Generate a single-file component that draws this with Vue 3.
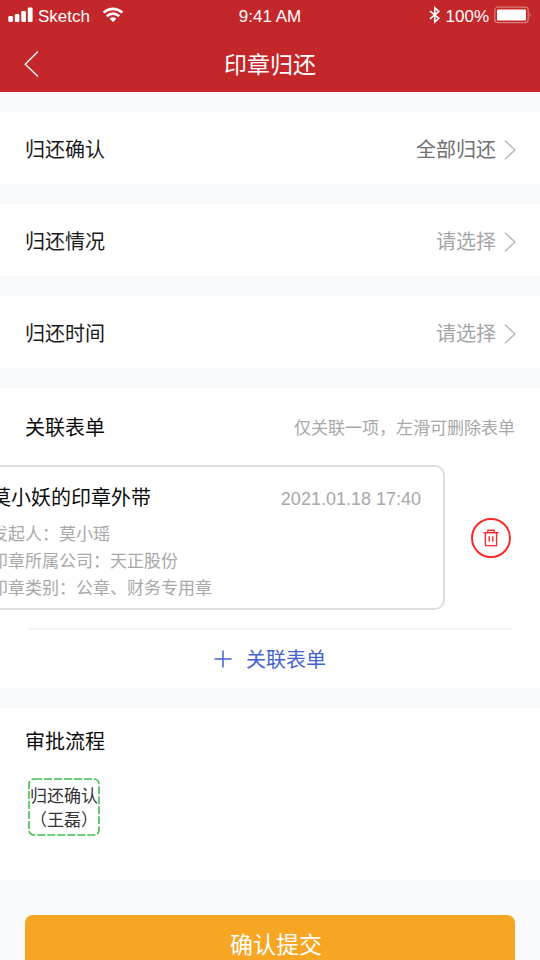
<script setup>
import { ref } from 'vue'

const fields = ref([
  { id: 'confirm', label: '归还确认', value: '全部归还' },
  { id: 'status', label: '归还情况', value: '' },
  { id: 'time', label: '归还时间', value: '' },
])

const form = {
  title: '莫小妖的印章外带',
  time: '2021.01.18 17:40',
  details: [
    { name: '发起人', value: '莫小瑶' },
    { name: '印章所属公司', value: '天正股份' },
    { name: '印章类别', value: '公章、财务专用章' },
  ],
}
</script>

<template>
  <div class="page">
    <header class="top">
      <div class="status">
        <div class="status-side">
          <svg class="signal" width="25" height="16" viewBox="0 0 25 16" fill="#fff" aria-hidden="true">
            <rect x="0.3" y="9" width="4.6" height="6" rx="1.2" />
            <rect x="6.8" y="7" width="4.6" height="8" rx="1.2" />
            <rect x="13.3" y="4" width="4.6" height="11" rx="1.2" />
            <rect x="19.8" y="0.5" width="4.8" height="14.5" rx="1.2" />
          </svg>
          <span>Sketch</span>
          <svg class="wifi" width="22" height="16" viewBox="0 0 22 16" fill="none" stroke="#fff" stroke-width="2.6" aria-hidden="true">
            <path d="M1.6 5.6 Q11 -2 20.4 5.6" />
            <path d="M4.8 9.2 Q11 4 17.2 9.2" />
            <path d="M7.6 11.7 Q11 8.8 14.4 11.7 L11 15z" fill="#fff" stroke="none" />
          </svg>
        </div>
        <span class="clock">9:41 AM</span>
        <div class="status-side end">
          <svg class="bluetooth" width="12" height="18" viewBox="0 0 12 18" fill="none" stroke="#fff" stroke-width="1.6" aria-hidden="true">
            <path d="M1 5 L9.8 12.3 L5.8 16 V1.8 L9.8 5.4 L1 12.8" />
          </svg>
          <span>100%</span>
          <svg class="battery" width="38" height="18" viewBox="0 0 38 18" aria-hidden="true">
            <rect x="0.8" y="1.2" width="33.4" height="15.4" rx="3" fill="none" stroke="#fff" stroke-opacity=".4" stroke-width="1.2" />
            <rect x="3" y="3.4" width="29" height="11" rx="1" fill="#fff" />
            <path d="M35.6 6.5 Q38 9 35.6 11.5z" fill="#fff" fill-opacity=".4" />
          </svg>
        </div>
      </div>
      <nav class="nav">
        <button class="back" type="button" aria-label="返回">
          <svg width="16" height="28" viewBox="0 0 16 28" fill="none" stroke="#fff" stroke-width="1.4" aria-hidden="true">
            <path d="M14 1.6 L1.2 14.2 L14 26.4" />
          </svg>
        </button>
        <h1>印章归还</h1>
      </nav>
    </header>

    <main class="content">
      <button v-for="f in fields" :key="f.id" class="field" type="button">
        <span class="label">{{ f.label }}</span>
        <span class="value" :class="{ filled: f.value }">{{ f.value || '请选择' }}</span>
        <svg class="arrow" width="12" height="20" viewBox="0 0 12 20" fill="none" stroke="#b5b5b5" stroke-width="1.4" aria-hidden="true">
          <path d="M1 .8 L11 10 L1 19.2" />
        </svg>
      </button>

      <section class="related">
        <div class="related-head">
          <h2>关联表单</h2>
          <p class="hint">仅关联一项，左滑可删除表单</p>
        </div>
        <div class="swipe">
          <article class="card">
            <div class="card-head">
              <h3>{{ form.title }}</h3>
              <time>{{ form.time }}</time>
            </div>
            <p v-for="d in form.details" :key="d.name">{{ d.name }}：{{ d.value }}</p>
          </article>
          <button class="delete" type="button" aria-label="删除">
            <svg width="16" height="18" viewBox="0 0 16 18" fill="none" stroke="#fb2a2a" stroke-width="1.4" aria-hidden="true">
              <path d="M.5 3.7 H15.5 M4.8 3.5 V1.2 H11.2 V3.5 M2.4 4 V16.6 H13.6 V4 M6.2 7.2 V12.8 M9.8 7.2 V12.8" />
            </svg>
          </button>
        </div>
        <button class="add" type="button">
          <svg width="18" height="18" viewBox="0 0 18 18" fill="none" stroke="#4462cf" stroke-width="1.5" aria-hidden="true">
            <path d="M9 .5 V17.5 M.5 9 H17.5" />
          </svg>
          <span>关联表单</span>
        </button>
      </section>

      <section class="flow">
        <h2>审批流程</h2>
        <div class="step">
          <svg class="outline" width="72" height="58" viewBox="0 0 72 58" fill="none" stroke="#42bd50" stroke-width="1.6" stroke-dasharray="8 2" aria-hidden="true">
            <rect x="1" y="1" width="70" height="56" rx="5" />
          </svg>
          <span>归还确认</span>
          <span>（王磊）</span>
        </div>
      </section>
    </main>

    <footer class="actions">
      <button class="submit" type="button">确认提交</button>
    </footer>
  </div>
</template>

<style>
body {
  margin: 0;
  background: #f8fafc;
}
</style>

<style scoped>
.page {
  font-family: "Noto Sans CJK SC", sans-serif;
  font-size: 20px;
  line-height: 28px;
  color: #1a1a1a;
  overflow: hidden;
}
h1, h2, h3, p {
  margin: 0;
  font-size: inherit;
  font-weight: 400;
}
button {
  margin: 0;
  padding: 0;
  border: 0;
  background: none;
  color: inherit;
  font: inherit;
  cursor: pointer;
}
svg {
  display: block;
  flex: none;
}
.top {
  background: #c4272a;
  color: #fff;
}
.status {
  display: grid;
  grid-template-columns: 1fr auto 1fr;
  align-items: center;
  box-sizing: border-box;
  height: 32px;
  padding: 2px 8px 0;
  font-family: "Liberation Sans", sans-serif;
  font-size: 17px;
}
.status-side {
  display: flex;
  align-items: center;
  gap: 5px;
}
.end {
  justify-content: flex-end;
}
.signal {
  margin-bottom: 4px;
}
.wifi {
  margin: 0 0 4px 7px;
}
.bluetooth,
.battery {
  margin-bottom: 4px;
}
.nav {
  display: grid;
  grid-template-columns: 1fr auto 1fr;
  align-items: center;
  height: 60px;
  padding: 0 24px;
}
.back {
  justify-self: start;
  padding-top: 4px;
}
h1 {
  padding-top: 2px;
  font-size: 23px;
}
.content {
  display: flex;
  flex-direction: column;
  gap: 20px;
  padding-top: 20px;
}
.field {
  display: flex;
  align-items: center;
  box-sizing: border-box;
  height: 72px;
  padding: 2px 24px 0 25px;
  background: #fff;
  text-align: left;
}
.label {
  flex: 1;
}
.value {
  margin-right: 8px;
  color: #a5a5a5;
}
.filled {
  color: #707070;
}
.arrow {
  margin-top: 2px;
}
.related,
.flow {
  background: #fff;
}
h2, h3 {
  color: #0c0c0c;
}
.related-head {
  display: flex;
  align-items: center;
  justify-content: space-between;
  height: 77px;
  padding: 0 25px;
}
.hint {
  color: #a8a8a8;
  font-size: 17px;
}
.swipe {
  display: flex;
  align-items: center;
  justify-content: flex-end;
  gap: 26px;
  padding-right: 29px;
  overflow: hidden;
}
.card {
  box-sizing: border-box;
  flex: none;
  width: calc(100% - 33px);
  padding: 16px 22px 8px;
  border: 2px solid #dedede;
  border-radius: 10px;
}
.card-head {
  display: flex;
  align-items: center;
  justify-content: space-between;
  margin-bottom: 8px;
}
.card p {
  color: #a8a8a8;
  font-size: 17px;
  line-height: 27px;
}
time {
  padding-top: 4px;
  color: #a8a8a8;
  font-family: "Liberation Sans", sans-serif;
  font-size: 18px;
  line-height: 24px;
}
.delete {
  display: flex;
  flex: none;
  align-items: center;
  justify-content: center;
  box-sizing: border-box;
  width: 40px;
  height: 40px;
  border: 2px solid #fb2a2a;
  border-radius: 50%;
}
.add {
  display: flex;
  align-items: center;
  justify-content: center;
  gap: 14px;
  width: calc(100% - 56px);
  height: 60px;
  margin: 18px 28px 0;
  border-top: 2px solid #f6f6f7;
  color: #4462cf;
}
.flow {
  padding: 19px 25px 44px;
}
.step {
  position: relative;
  display: flex;
  flex-direction: column;
  align-items: center;
  box-sizing: border-box;
  width: 72px;
  margin: 23px 3px 0;
  padding: 5px 0;
  color: #333;
  font-size: 17px;
  line-height: 24px;
}
.outline {
  position: absolute;
  inset: 0;
}
.actions {
  padding: 35px 25px 24px;
}
.submit {
  width: 100%;
  height: 56px;
  padding-left: 12px;
  border-radius: 8px;
  background: #f6a623;
  color: #fff;
  font-size: 23px;
}
</style>
